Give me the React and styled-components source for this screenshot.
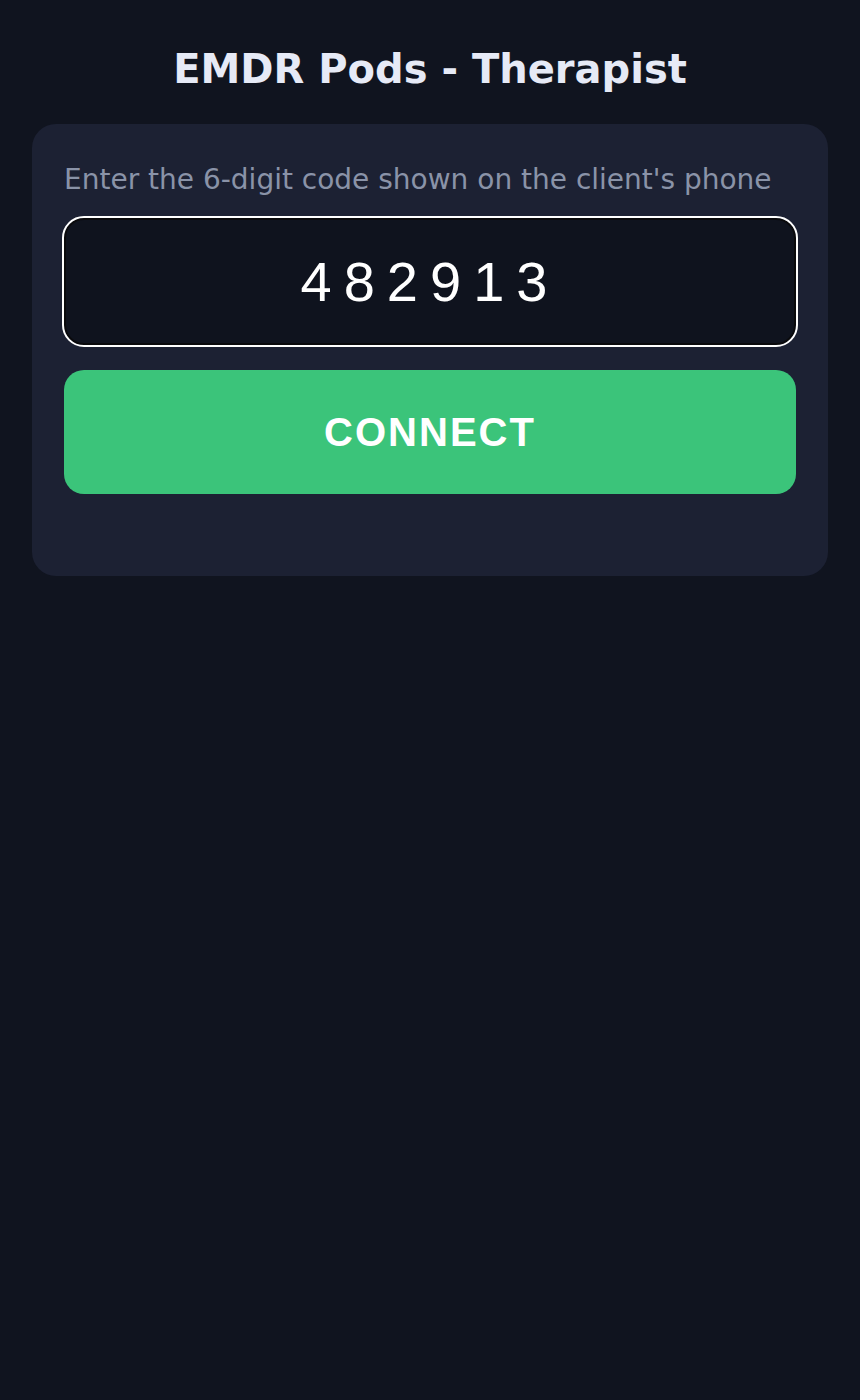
import React, { useState } from "react";
import styled, { createGlobalStyle } from "styled-components";

const GlobalStyle = createGlobalStyle`
  html, body {
    margin: 0;
    padding: 0;
    background: #10141f;
  }
  body {
    font-family: "DejaVu Sans", sans-serif;
    color: #e6eaf6;
  }
  * { box-sizing: border-box; }
`;

const Page = styled.main`
  min-height: 1400px;
  padding: 46px 32px 32px;
  display: flex;
  flex-direction: column;
`;

const Title = styled.h1`
  margin: 0 0 32px;
  font-family: "DejaVu Sans", sans-serif;
  font-size: 40px;
  font-weight: 700;
  line-height: normal;
  text-align: center;
  color: #e6eaf6;
`;

const Card = styled.section`
  background: #1c2133;
  border-radius: 24px;
  padding: 32px;
  display: flex;
  flex-direction: column;
`;

const Label = styled.label`
  font-size: 28px;
  line-height: 1.5;
  color: #8a93a8;
  padding-top: 3px;
  margin-bottom: 17px;
`;

const CodeInput = styled.input`
  display: block;
  width: 100%;
  height: 127px;
  background: #0f131e;
  border: 2px solid #0a0a0c;
  border-radius: 20px;
  outline: 2px solid #ffffff;
  outline-offset: 0;
  font-family: "Liberation Sans", Arial, sans-serif;
  font-size: 56px;
  letter-spacing: 12px;
  text-align: center;
  color: #ffffff;
  padding: 0;
`;

const ConnectButton = styled.button`
  margin-top: 25px;
  height: 124px;
  width: 100%;
  border: none;
  border-radius: 20px;
  background: #3bc47a;
  color: #ffffff;
  font-family: "Liberation Sans", Arial, sans-serif;
  font-weight: 700;
  font-size: 40px;
  letter-spacing: 2px;
  cursor: pointer;
`;

const Status = styled.p`
  margin: 0;
  min-height: 50px;
  font-size: 28px;
  color: #8a93a8;
`;

export default function App() {
  const [code, setCode] = useState("482913");
  return (
    <>
      <GlobalStyle />
      <Page>
        <Title>EMDR Pods - Therapist</Title>
        <Card>
          <Label htmlFor="code">Enter the 6-digit code shown on the client's phone</Label>
          <CodeInput
            id="code"
            inputMode="numeric"
            maxLength={6}
            value={code}
            onChange={(e) => setCode(e.target.value)}
          />
          <ConnectButton>CONNECT</ConnectButton>
          <Status />
        </Card>
      </Page>
    </>
  );
}
